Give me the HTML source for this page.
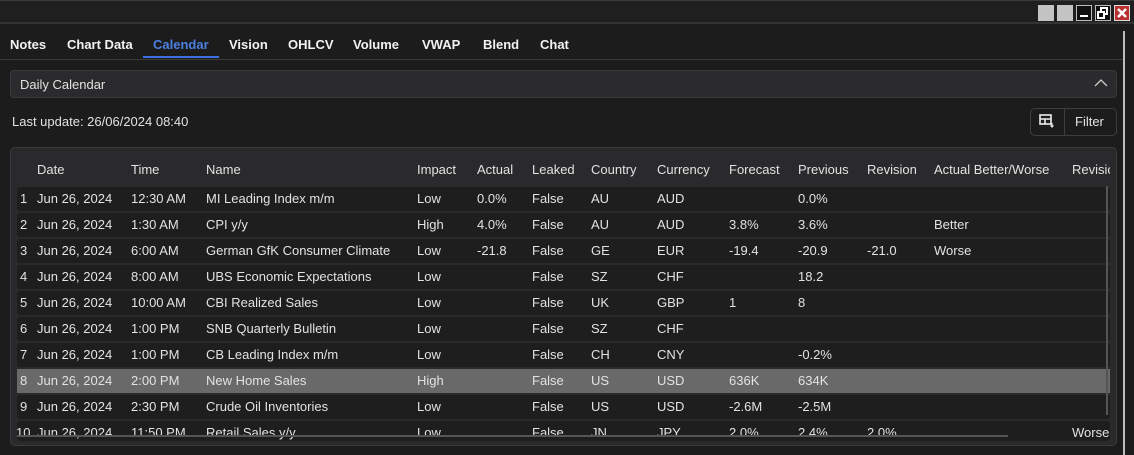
<!DOCTYPE html>
<html><head><meta charset="utf-8">
<style>
*{margin:0;padding:0;box-sizing:border-box}
body{width:1134px;height:455px;background:#1c1c1c;font-family:"Liberation Sans",sans-serif;color:#e2e2e2;font-size:13px;position:relative;overflow:hidden}
.abs{position:absolute}
.tab{position:absolute;top:37px;font-weight:bold;font-size:13px;color:#f2f2f2}
.row{position:absolute;left:17px;width:1093px;height:24px;background:#1e1e1e;border-radius:3px}
.row span,.hdr span{position:absolute;top:4px;white-space:nowrap}
.hdr span{top:0}
</style></head><body>
<div class="abs" style="left:0;top:0;width:1134px;height:24px;background:#1f1f1f;border-bottom:2px solid #333"></div>
<div class="abs" style="left:0;top:0;width:1134px;height:1px;background:#3a3a3a"></div>
<div class="abs" style="left:1038px;top:5px;width:16px;height:16px;background:#c4c4c4"></div>
<div class="abs" style="left:1057px;top:5px;width:16px;height:16px;background:#c4c4c4"></div>
<div class="abs" style="left:1076px;top:5px;width:16px;height:16px;background:#111;border:1px solid #bbb"><div class="abs" style="left:3px;top:9px;width:8px;height:2px;background:#fff"></div></div>
<div class="abs" style="left:1095px;top:5px;width:16px;height:16px;background:#111;border:1px solid #bbb"><svg width="14" height="14" style="position:absolute;left:0;top:0"><rect x="5" y="2" width="6" height="6" fill="none" stroke="#fff" stroke-width="2"/><rect x="2" y="6" width="6" height="6" fill="#111" stroke="#fff" stroke-width="2"/></svg></div>
<div class="abs" style="left:1114px;top:5px;width:16px;height:16px;background:#b83030;border:1px solid #ddd"><svg width="14" height="14" style="position:absolute;left:0;top:0"><path d="M3 3L11 11M11 3L3 11" stroke="#fff" stroke-width="2.5"/></svg></div>
<div class="abs" style="left:1123px;top:31px;width:2px;height:424px;background:#bdbdbd"></div>
<div class="abs" style="left:0;top:59px;width:1123px;height:1px;background:#3a3a3a"></div>
<div class="tab" style="left:10px">Notes</div>
<div class="tab" style="left:67px">Chart Data</div>
<div class="tab" style="left:153px;color:#4b7fe0">Calendar</div>
<div class="tab" style="left:229px">Vision</div>
<div class="tab" style="left:288px">OHLCV</div>
<div class="tab" style="left:353px">Volume</div>
<div class="tab" style="left:422px">VWAP</div>
<div class="tab" style="left:483px">Blend</div>
<div class="tab" style="left:540px">Chat</div>
<div class="abs" style="left:143px;top:56px;width:76px;height:2px;background:#3c6fe0"></div>
<div class="abs" style="left:10px;top:70px;width:1107px;height:28px;background:#2b2b2d;border:1px solid #3a3a3c;border-radius:4px"></div>
<div class="abs" style="left:20px;top:77px">Daily Calendar</div>
<svg class="abs" style="left:1094px;top:78px" width="14" height="10"><path d="M1 8L7 2L13 8" fill="none" stroke="#ccc" stroke-width="1.3"/></svg>
<div class="abs" style="left:12px;top:114px">Last update: 26/06/2024 08:40</div>
<div class="abs" style="left:1030px;top:108px;width:87px;height:28px;border:1px solid #3e3e40;border-radius:5px;background:#1c1c1c"></div>
<div class="abs" style="left:1064px;top:109px;width:1px;height:26px;background:#3e3e40"></div>
<svg class="abs" style="left:1039px;top:114px" width="16" height="15"><rect x="1" y="1" width="11" height="9" fill="none" stroke="#eee" stroke-width="1.6"/><path d="M1 5H12M6 5V10" stroke="#eee" stroke-width="1.6"/><path d="M13 9V13M11.5 11.5L13 13L14.5 11.5" stroke="#eee" stroke-width="1.2" fill="none"/></svg>
<div class="abs" style="left:1075px;top:114px">Filter</div>
<div class="abs" style="left:10px;top:147px;width:1107px;height:299px;background:#2a2a2c;border:1px solid #3a3a3c;border-radius:5px"></div>
<div class="hdr abs" style="left:0;top:162px;width:1110px;height:16px;overflow:hidden">
<span style="left:37px">Date</span><span style="left:131px">Time</span><span style="left:206px">Name</span><span style="left:417px">Impact</span><span style="left:477px">Actual</span><span style="left:532px">Leaked</span><span style="left:591px">Country</span><span style="left:657px">Currency</span><span style="left:729px">Forecast</span><span style="left:798px">Previous</span><span style="left:867px">Revision</span><span style="left:934px">Actual Better/Worse</span><span style="left:1072px">Revision</span></div>
<div class="row" style="top:187px"><span style="left:3px">1</span><span style="left:20px">Jun 26, 2024</span><span style="left:114px">12:30 AM</span><span style="left:189px">MI Leading Index m/m</span><span style="left:400px">Low</span><span style="left:460px">0.0%</span><span style="left:515px">False</span><span style="left:574px">AU</span><span style="left:640px">AUD</span><span style="left:781px">0.0%</span></div>
<div class="row" style="top:213px"><span style="left:3px">2</span><span style="left:20px">Jun 26, 2024</span><span style="left:114px">1:30 AM</span><span style="left:189px">CPI y/y</span><span style="left:400px">High</span><span style="left:460px">4.0%</span><span style="left:515px">False</span><span style="left:574px">AU</span><span style="left:640px">AUD</span><span style="left:712px">3.8%</span><span style="left:781px">3.6%</span><span style="left:917px">Better</span></div>
<div class="row" style="top:239px"><span style="left:3px">3</span><span style="left:20px">Jun 26, 2024</span><span style="left:114px">6:00 AM</span><span style="left:189px">German GfK Consumer Climate</span><span style="left:400px">Low</span><span style="left:460px">-21.8</span><span style="left:515px">False</span><span style="left:574px">GE</span><span style="left:640px">EUR</span><span style="left:712px">-19.4</span><span style="left:781px">-20.9</span><span style="left:850px">-21.0</span><span style="left:917px">Worse</span></div>
<div class="row" style="top:265px"><span style="left:3px">4</span><span style="left:20px">Jun 26, 2024</span><span style="left:114px">8:00 AM</span><span style="left:189px">UBS Economic Expectations</span><span style="left:400px">Low</span><span style="left:515px">False</span><span style="left:574px">SZ</span><span style="left:640px">CHF</span><span style="left:781px">18.2</span></div>
<div class="row" style="top:291px"><span style="left:3px">5</span><span style="left:20px">Jun 26, 2024</span><span style="left:114px">10:00 AM</span><span style="left:189px">CBI Realized Sales</span><span style="left:400px">Low</span><span style="left:515px">False</span><span style="left:574px">UK</span><span style="left:640px">GBP</span><span style="left:712px">1</span><span style="left:781px">8</span></div>
<div class="row" style="top:317px"><span style="left:3px">6</span><span style="left:20px">Jun 26, 2024</span><span style="left:114px">1:00 PM</span><span style="left:189px">SNB Quarterly Bulletin</span><span style="left:400px">Low</span><span style="left:515px">False</span><span style="left:574px">SZ</span><span style="left:640px">CHF</span></div>
<div class="row" style="top:343px"><span style="left:3px">7</span><span style="left:20px">Jun 26, 2024</span><span style="left:114px">1:00 PM</span><span style="left:189px">CB Leading Index m/m</span><span style="left:400px">Low</span><span style="left:515px">False</span><span style="left:574px">CH</span><span style="left:640px">CNY</span><span style="left:781px">-0.2%</span></div>
<div class="row" style="top:369px;background:#696969;width:1093px;border-radius:0"><span style="left:3px">8</span><span style="left:20px">Jun 26, 2024</span><span style="left:114px">2:00 PM</span><span style="left:189px">New Home Sales</span><span style="left:400px">High</span><span style="left:515px">False</span><span style="left:574px">US</span><span style="left:640px">USD</span><span style="left:712px">636K</span><span style="left:781px">634K</span></div>
<div class="row" style="top:395px"><span style="left:3px">9</span><span style="left:20px">Jun 26, 2024</span><span style="left:114px">2:30 PM</span><span style="left:189px">Crude Oil Inventories</span><span style="left:400px">Low</span><span style="left:515px">False</span><span style="left:574px">US</span><span style="left:640px">USD</span><span style="left:712px">-2.6M</span><span style="left:781px">-2.5M</span></div>
<div class="row" style="top:421px;height:20px;overflow:hidden"><span style="left:-1px">10</span><span style="left:20px">Jun 26, 2024</span><span style="left:114px">11:50 PM</span><span style="left:189px">Retail Sales y/y</span><span style="left:400px">Low</span><span style="left:515px">False</span><span style="left:574px">JN</span><span style="left:640px">JPY</span><span style="left:712px">2.0%</span><span style="left:781px">2.4%</span><span style="left:850px">2.0%</span><span style="left:1055px">Worse</span></div>
<div class="abs" style="left:1106px;top:186px;width:2px;height:229px;background:#555"></div>
<div class="abs" style="left:17px;top:435px;width:991px;height:2px;background:#555"></div>
</body></html>
